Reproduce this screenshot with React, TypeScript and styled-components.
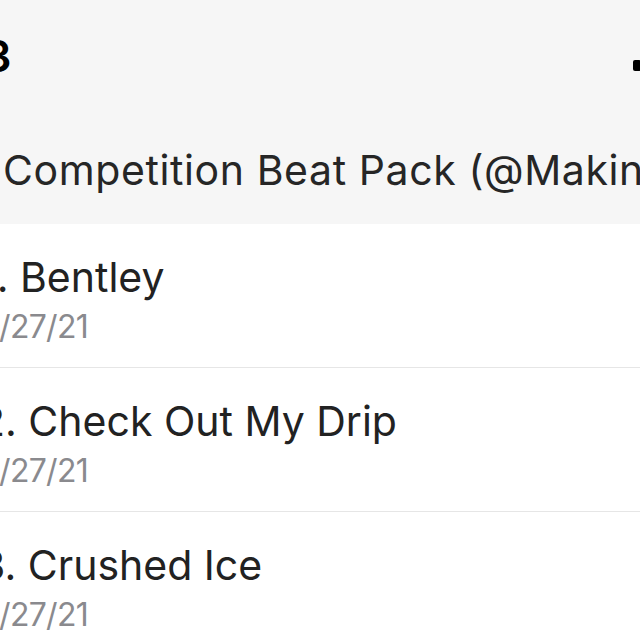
import React from "react";
import styled, { createGlobalStyle } from "styled-components";

const Global = createGlobalStyle`
  html, body { margin: 0; padding: 0; background: #ffffff; }
  body { font-family: Inter, "Noto Sans", "Liberation Sans", sans-serif; }
`;

const Screen = styled.div`
  width: 640px;
  height: 640px;
  overflow: hidden;
  display: flex;
  flex-direction: column;
  background: #ffffff;
`;

const Top = styled.header`
  background: #f6f6f6;
  display: flex;
  flex-direction: column;
  padding-bottom: 33px;
`;

const StatusBar = styled.div`
  height: 100px;
  display: flex;
  justify-content: space-between;
  align-items: flex-start;
`;

const Time = styled.div`
  width: 120px;
  margin-left: -109px;
  margin-top: 34px;
  text-align: right;
  font-size: 44px;
  line-height: 44px;
  font-weight: 600;
  color: #000;
  letter-spacing: -0.5px;
`;

const Signal = styled.div`
  display: flex;
  align-items: flex-end;
  gap: 4px;
  margin-top: 60px;
  margin-right: -30px;
  height: 11px;
  width: 37px;
`;

const Bar = styled.span<{ $h: number }>`
  display: block;
  width: 8px;
  height: ${(p) => p.$h}px;
  background: #000;
  border-radius: 2px;
  flex: none;
`;

const Title = styled.h1`
  margin: 50px 0 0 3px;
  font-size: 41px;
  line-height: 41px;
  font-weight: 400;
  letter-spacing: 0.6px;
  color: #262626;
  white-space: nowrap;
`;

const List = styled.ul`
  list-style: none;
  margin: 0;
  padding: 0;
`;

const Row = styled.li`
  padding: 33px 0 24px;
  border-bottom: 1px solid #e6e6e6;
  margin-left: -20px;
  display: flex;
  flex-direction: column;
`;

const TrackName = styled.div`
  font-size: 41px;
  line-height: 41px;
  color: #222222;
  white-space: nowrap;
`;

const DateText = styled.div`
  margin-top: 13px;
  font-size: 32px;
  line-height: 32px;
  letter-spacing: -0.7px;
  color: #8a8a8e;
  white-space: nowrap;
`;

const tracks = [
  { n: 1, name: "Bentley", date: "3/27/21" },
  { n: 2, name: "Check Out My Drip", date: "3/27/21" },
  { n: 3, name: "Crushed Ice", date: "3/27/21" },
];

export default function App() {
  return (
    <>
      <Global />
      <Screen>
        <Top>
          <StatusBar>
            <Time>9:43</Time>
            <Signal>
              <Bar $h={11} />
              <Bar $h={15} />
              <Bar $h={19} />
            </Signal>
          </StatusBar>
          <Title>Competition Beat Pack (@MakingBeats)</Title>
        </Top>
        <List>
          {tracks.map((t) => (
            <Row key={t.n}>
              <TrackName>
                {t.n}. {t.name}
              </TrackName>
              <DateText>{t.date}</DateText>
            </Row>
          ))}
        </List>
      </Screen>
    </>
  );
}
